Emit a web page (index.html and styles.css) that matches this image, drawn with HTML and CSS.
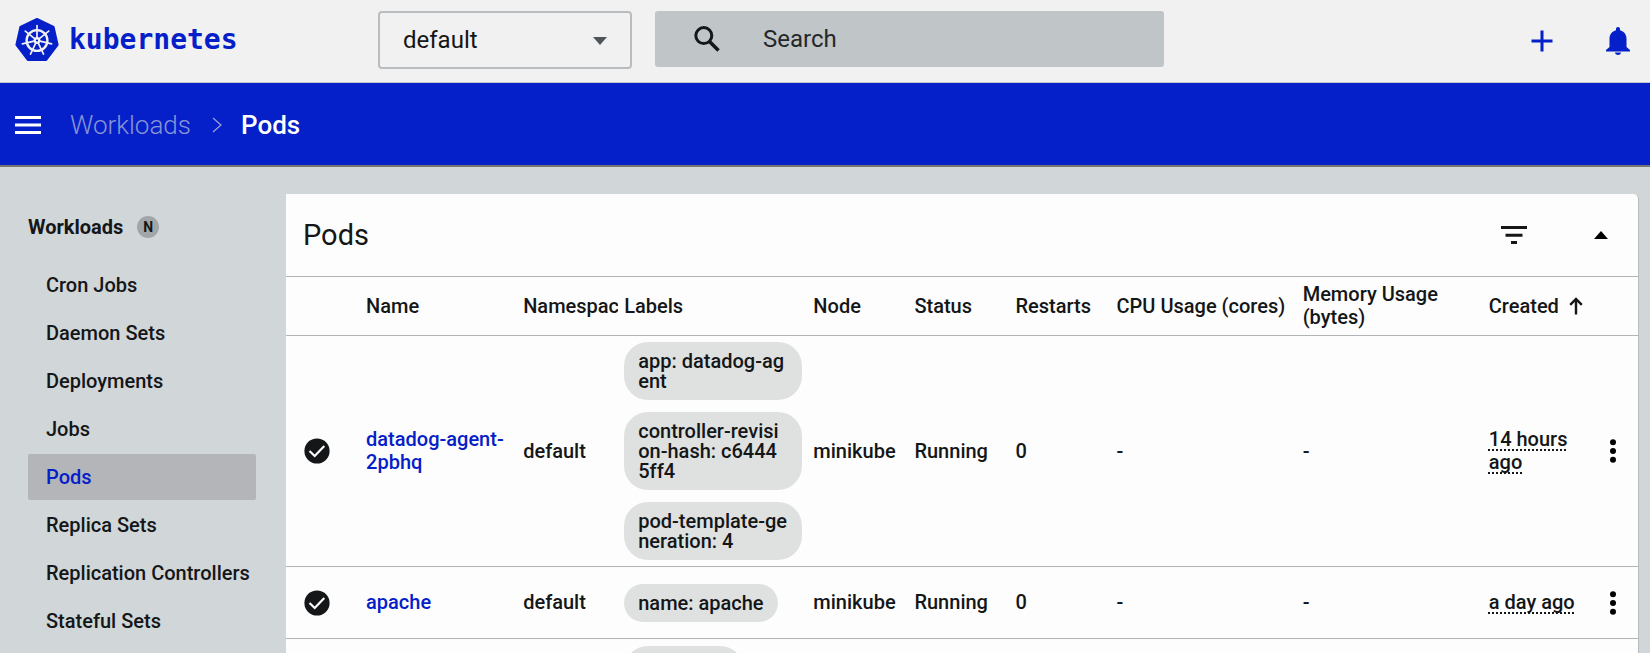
FILE: index.html
```html
<!DOCTYPE html>
<html lang="en">
<head>
<meta charset="utf-8">
<title>Pods - Kubernetes Dashboard</title>
<meta name="viewport" content="width=device-width, initial-scale=1">
<link rel="stylesheet" href="styles.css">
</head>
<body>
<svg class="defs" aria-hidden="true">
  <symbol id="check" viewBox="0 0 26 26"><circle cx="13" cy="13" r="12.6" fill="#141617"/><path d="M5.5 13 10.7 18 20.3 8" fill="none" stroke="#fdfdfd" stroke-width="2.2"/></symbol>
  <symbol id="dots" viewBox="0 0 8 24"><circle cx="4" cy="3.2" r="3"/><circle cx="4" cy="12" r="3"/><circle cx="4" cy="20.8" r="3"/></symbol>
</svg>
<header class="topbar">
  <a class="brand" href="#">
    <svg class="brand-mark" viewBox="0 0 44 44" aria-hidden="true">
      <path d="M22 1 38.6 9 42.6 26.8 31.2 42 12.8 42 1.4 26.8 5.4 9Z" fill="#0520c8" stroke="#0520c8" stroke-width="2" stroke-linejoin="round"/>
      <g fill="none" stroke="#f1f1f1" stroke-width="1.7" stroke-linecap="round">
        <circle cx="22" cy="22.5" r="10.4" stroke-width="2.4"/>
        <path d="M22 19.5V7.5"/>
        <path d="M22 19.5V7.5" transform="rotate(51.43 22 22.5)"/>
        <path d="M22 19.5V7.5" transform="rotate(102.86 22 22.5)"/>
        <path d="M22 19.5V7.5" transform="rotate(154.29 22 22.5)"/>
        <path d="M22 19.5V7.5" transform="rotate(205.71 22 22.5)"/>
        <path d="M22 19.5V7.5" transform="rotate(257.14 22 22.5)"/>
        <path d="M22 19.5V7.5" transform="rotate(308.57 22 22.5)"/>
      </g>
      <circle cx="22" cy="22.5" r="3.4" fill="#f1f1f1"/><circle cx="22" cy="22.5" r="1.1" fill="#0520c8"/>
    </svg>
    <span class="brand-name">kubernetes</span>
  </a>
  <div class="namespace">
    <select class="namespace-select" aria-label="Namespace"><option>default</option></select>
    <svg class="namespace-arrow" viewBox="0 0 14 8" aria-hidden="true"><path d="M0 0H14L7 8Z"/></svg>
  </div>
  <label class="search">
    <svg class="search-icon" viewBox="0 0 26 26" aria-hidden="true"><circle cx="9.8" cy="9.6" r="8" fill="none" stroke="#141617" stroke-width="3"/><path d="M15.5 15.5 24.5 24.5" stroke="#141617" stroke-width="3.6"/></svg>
    <input class="search-input" type="text" placeholder="Search" aria-label="Search">
  </label>
  <div class="actions">
    <button class="icon-button" aria-label="Create"><svg class="plus" viewBox="0 0 22 22"><path d="M11 .5V21.5M.5 11H21.5" stroke="#0520c8" stroke-width="3"/></svg></button>
    <button class="icon-button" aria-label="Notifications"><svg class="bell" viewBox="0 0 24 28"><path d="M12 0c1.200 0 2 .9 2 2v1.300c4 1 6.500 4.300 6.500 8.400V20l3.500 3v1.500H0V23l3.500-3v-8.300C3.500 7.600 6 4.300 10 3.300V2C10 .9 10.800 0 12 0Z"/><path d="M9 25.500h6c0 1.600-1.300 2.500-3 2.500s-3-.9-3-2.500Z"/></svg></button>
  </div>
</header>
<nav class="crumbs" aria-label="Breadcrumb">
  <button class="icon-button" aria-label="Menu"><svg class="burger" viewBox="0 0 26 18"><path d="M0 1.500H26M0 9H26M0 16.500H26" stroke="#fff" stroke-width="3"/></svg></button>
  <a class="crumb" href="#">Workloads</a>
  <svg class="chevron" viewBox="0 0 10 16" aria-hidden="true"><path d="M1 1 9 8 1 15" fill="none" stroke="#9aa5d8" stroke-width="1.200"/></svg>
  <span class="crumb-current">Pods</span>
</nav>
<div class="body">
  <nav class="side" aria-label="Resources">
    <a class="side-group" href="#">Workloads <span class="badge">N</span></a>
    <a class="side-item" href="#">Cron Jobs</a>
    <a class="side-item" href="#">Daemon Sets</a>
    <a class="side-item" href="#">Deployments</a>
    <a class="side-item" href="#">Jobs</a>
    <a class="side-item side-active" href="#">Pods</a>
    <a class="side-item" href="#">Replica Sets</a>
    <a class="side-item" href="#">Replication Controllers</a>
    <a class="side-item" href="#">Stateful Sets</a>
  </nav>
  <main class="card">
    <div class="card-head">
      <h1 class="card-title">Pods</h1>
      <button class="icon-button" aria-label="Filter"><svg class="filter" viewBox="0 0 26 18"><path d="M0 1.500H26M4.500 9.200H21.500M10 16.500H16" stroke="#141617" stroke-width="3"/></svg></button>
      <button class="icon-button" aria-label="Collapse"><svg class="collapse" viewBox="0 0 14 8"><path d="M0 8H14L7 0Z"/></svg></button>
    </div>
    <table class="pods">
      <colgroup><col class="c-icon"><col class="c-name"><col class="c-small"><col class="c-labels"><col class="c-small"><col class="c-small"><col class="c-small"><col class="c-usage"><col class="c-usage"><col class="c-small"><col class="c-menu"></colgroup>
      <thead>
        <tr><th></th><th>Name</th><th><div class="clip">Namespace</div></th><th>Labels</th><th>Node</th><th>Status</th><th>Restarts</th><th>CPU Usage (cores)</th><th>Memory Usage (bytes)</th><th class="created">Created <svg class="sort" viewBox="0 0 14 18"><path d="M7 17.500V2M1.200 7.800 7 2 12.800 7.800" fill="none" stroke="#141617" stroke-width="2.400"/></svg></th><th></th></tr>
      </thead>
      <tbody>
        <tr>
          <td class="state"><svg class="check"><use href="#check"/></svg></td>
          <td><a class="pod" href="#">datadog-agent-2pbhq</a></td><td>default</td>
          <td><div class="chips"><span class="chip">app: datadog-agent</span><span class="chip">controller-revision-hash: c6444<br>5ff4</span><span class="chip">pod-template-generation: 4</span></div></td>
          <td>minikube</td><td>Running</td><td>0</td><td>-</td><td>-</td>
          <td><span class="age">14 hours ago</span></td>
          <td><button class="icon-button" aria-label="Actions"><svg class="dots"><use href="#dots"/></svg></button></td>
        </tr>
        <tr>
          <td class="state"><svg class="check"><use href="#check"/></svg></td>
          <td><a class="pod" href="#">apache</a></td><td>default</td>
          <td><div class="chips"><span class="chip">name: apache</span></div></td>
          <td>minikube</td><td>Running</td><td>0</td><td>-</td><td>-</td>
          <td><span class="age">a day ago</span></td>
          <td><button class="icon-button" aria-label="Actions"><svg class="dots"><use href="#dots"/></svg></button></td>
        </tr>
        <tr>
          <td></td><td></td><td></td><td><div class="chips"><span class="chip chip-short"></span></div></td><td></td><td></td><td></td><td></td><td></td><td></td><td></td>
        </tr>
      </tbody>
    </table>
  </main>
</div>
</body>
</html>
```
FILE: styles.css
```css
* { box-sizing: border-box; }
body {
  margin: 0;
  height: 100vh;
  overflow: hidden;
  display: flex;
  flex-direction: column;
  background: #d1d6d9;
  color: #141617;
  font: 500 20px/23px Roboto, sans-serif;
}
a { color: inherit; text-decoration: none; }
svg { display: block; flex: none; }
.defs { width: 0; height: 0; position: absolute; }
.icon-button {
  display: flex;
  padding: 0;
  border: 0;
  background: none;
  color: inherit;
}
.topbar {
  flex: none;
  display: flex;
  align-items: center;
  height: 83px;
  padding: 0 20px 2px 15px;
  background: #f1f1f1;
  border-bottom: 1px solid #c4c8c4;
}
.brand {
  display: flex;
  align-items: center;
  gap: 10px;
  width: 363px;
  color: #0520c8;
}
.brand-mark { width: 44px; height: 44px; }
.brand-name { font: bold 28px/32px "DejaVu Sans Mono", monospace; }
.namespace { position: relative; width: 254px; }
.namespace-select {
  display: block;
  width: 100%;
  height: 58px;
  padding: 0 23px;
  appearance: none;
  border: 2px solid #babdc0;
  border-radius: 4px;
  background: transparent;
  color: #141617;
  font: 400 24px/28px Roboto, sans-serif;
}
.namespace-arrow {
  position: absolute;
  right: 25px;
  top: 26px;
  width: 14px;
  height: 8px;
  fill: #50555a;
  pointer-events: none;
}
.search {
  display: flex;
  align-items: center;
  gap: 43px;
  width: 509px;
  height: 56px;
  margin-left: 23px;
  margin-bottom: 2px;
  padding: 0 39px;
  background: #c0c5c8;
  border-radius: 3px;
}
.search-icon { width: 26px; height: 26px; }
.search-input {
  flex: 1;
  min-width: 0;
  padding: 0;
  border: 0;
  outline: 0;
  background: none;
  font: 400 24px/28px Roboto, sans-serif;
}
.search-input::placeholder { color: #25282a; opacity: 1; }
.actions {
  display: flex;
  align-items: center;
  gap: 53px;
  margin-left: auto;
  padding-top: 2px;
}
.plus { width: 22px; height: 22px; }
.bell { width: 24px; height: 28px; fill: #0520c8; }
.crumbs {
  flex: none;
  display: flex;
  align-items: center;
  height: 84px;
  padding: 2px 15px 0;
  background: #0520c8;
  border-bottom: 2px solid #74776f;
  color: #fff;
  font-size: 26px;
  line-height: 30px;
}
.burger { width: 26px; height: 18px; }
.crumb { margin-left: 29px; font-weight: 300; color: #8894d4; }
.chevron { width: 10px; height: 16px; margin: 0 19px 0 21px; }
.body { flex: 1; min-height: 0; display: flex; }
.side {
  flex: none;
  width: 286px;
  padding: 37px 30px 0 28px;
}
.side-group {
  display: flex;
  align-items: center;
  gap: 14px;
  margin-bottom: 12px;
  height: 46px;
  font-weight: 700;
}
.badge {
  width: 22px;
  border-radius: 11px;
  background: #a3a6a8;
  font-size: 14px;
  line-height: 22px;
  text-align: center;
}
.side-item {
  display: flex;
  align-items: center;
  height: 46px;
  margin-bottom: 2px;
  padding-left: 18px;
  white-space: nowrap;
}
.side-active { background: #b3b5b9; color: #0520c8; border-radius: 2px; }
.card {
  flex: 1;
  min-width: 0;
  margin: 27px 11px 0 0;
  background: #fdfdfd;
  border-right: 1px solid #b8bcbe;
  border-radius: 0 5px 0 0;
}
.card-head {
  display: flex;
  align-items: center;
  height: 82px;
  padding: 0 30px 0 17px;
}
.card-title { flex: 1; margin: 0; font: 400 29px/36px Roboto, sans-serif; }
.filter { width: 26px; height: 18px; margin-right: 67px; }
.collapse { width: 14px; height: 8px; }
.pods {
  width: 100%;
  table-layout: fixed;
  border-collapse: collapse;
}
.c-icon { width: 80px; }
.c-name { width: 157px; }
.c-small { width: 101px; }
.c-labels { width: 189px; }
.c-usage { width: 186px; }
.c-menu { width: 48px; }
.pods th, .pods td {
  padding: 0;
  border-top: 1px solid #b0b4b5;
  text-align: left;
  vertical-align: middle;
  font-weight: 500;
}
.pods th { height: 59px; }
.pods td { height: 72px; }
.clip { overflow: hidden; margin-right: 6px; }
.pods .state { padding-left: 18px; }
.created { white-space: nowrap; }
.sort { display: inline-block; width: 14px; height: 18px; margin-left: 5px; vertical-align: -2px; }
.check { width: 26px; height: 26px; }
.dots { width: 8px; height: 24px; margin-left: 19px; }
.pod { color: #0520c8; }
.chips {
  display: flex;
  flex-direction: column;
  align-items: flex-start;
  gap: 12px;
  padding: 6px 11px 6px 0;
}
.chip {
  padding: 9px 14px;
  border-radius: 24px;
  background: #dfe1e1;
  line-height: 20px;
  word-break: break-all;
}
.chip-short { width: 120px; height: 58px; }
.age { text-decoration: underline dotted 2px; text-underline-offset: 3px; text-decoration-skip-ink: none; }
```
